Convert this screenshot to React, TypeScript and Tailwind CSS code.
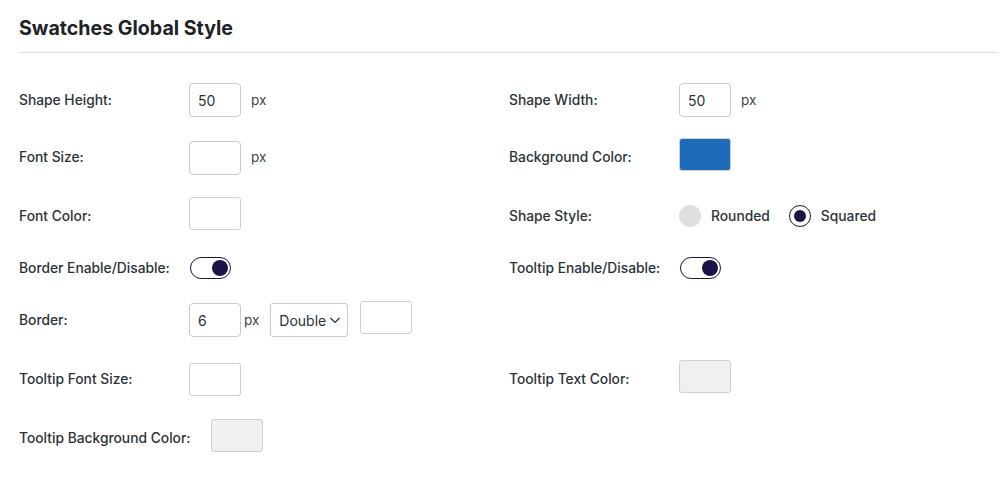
import React from "react";

const font = { fontFamily: "Inter, 'Noto Sans', sans-serif" };

function TextInput({ value }: { value?: string }) {
  return (
    <div className="w-[52px] h-[34px] border border-[#c9cacc] rounded-[4px] bg-white flex items-center pl-[8px] text-[14px] text-[#2c3338]">
      {value}
    </div>
  );
}

function ColorBox({ color = "#ffffff", up = true }: { color?: string; up?: boolean }) {
  return (
    <div
      className={`w-[52px] h-[33px] border border-[#cfd0d2] rounded-[3px] ${up ? "mb-[6px]" : ""}`}
      style={{ backgroundColor: color }}
    />
  );
}

function Px() {
  return <span className="text-[13.5px] text-[#3c434a] ml-[10px]">px</span>;
}

function Toggle() {
  return (
    <div className="w-[41px] h-[22px] rounded-full border-[1.5px] border-[#1b1547] flex items-center justify-end pr-[2px] bg-white">
      <div className="w-[16px] h-[16px] rounded-full bg-[#1b1547]" />
    </div>
  );
}

function Label({ children, w = "w-[170px]" }: { children: React.ReactNode; w?: string }) {
  return <div className={`${w} shrink-0 text-[13.8px] font-medium text-[#2c3338]`}>{children}</div>;
}

export default function App() {
  return (
    <div className="w-[1005px] h-[497px] bg-white" style={font}>
      <div className="pl-[19px] pt-[16px]">
        <h1 className="text-[19.6px] font-bold text-[#1d2327] leading-[24px]">Swatches Global Style</h1>
      </div>
      <div className="ml-[19px] mr-[7px] mt-[12px] h-px bg-[#dcdcde]" />
      <div className="pl-[19px] pt-[18px]">
        {/* Row 1 */}
        <div className="flex h-[58px] items-center">
          <div className="w-[490px] flex items-center">
            <Label>Shape Height:</Label>
            <TextInput value="50" />
            <Px />
          </div>
          <div className="flex items-center">
            <Label>Shape Width:</Label>
            <TextInput value="50" />
            <Px />
          </div>
        </div>
        {/* Row 2 */}
        <div className="flex h-[57px] items-center">
          <div className="w-[490px] flex items-center">
            <Label>Font Size:</Label>
            <TextInput />
            <Px />
          </div>
          <div className="flex items-center">
            <Label>Background Color:</Label>
            <ColorBox color="#1e6bb8" />
          </div>
        </div>
        {/* Row 3 */}
        <div className="flex h-[60px] items-center">
          <div className="w-[490px] flex items-center">
            <Label>Font Color:</Label>
            <ColorBox />
          </div>
          <div className="flex items-center">
            <Label>Shape Style:</Label>
            <div className="flex items-center">
              <div className="w-[22px] h-[22px] rounded-full bg-[#dfdfe0]" />
              <span className="ml-[10px] text-[13.8px] font-medium text-[#2c3338]">Rounded</span>
              <div className="ml-[19px] w-[22px] h-[22px] rounded-full border border-[#1b1547] flex items-center justify-center bg-white">
                <div className="w-[12px] h-[12px] rounded-full bg-[#1b1547]" />
              </div>
              <span className="ml-[10px] text-[13.8px] font-medium text-[#2c3338]">Squared</span>
            </div>
          </div>
        </div>
        {/* Row 4 */}
        <div className="flex h-[44px] items-center">
          <div className="w-[490px] flex items-center">
            <Label>Border Enable/Disable:</Label>
            <div className="ml-[1px]"><Toggle /></div>
          </div>
          <div className="flex items-center">
            <Label>Tooltip Enable/Disable:</Label>
            <div className="ml-[1px]"><Toggle /></div>
          </div>
        </div>
        {/* Row 5 */}
        <div className="flex h-[60px] items-center">
          <div className="w-[490px] flex items-center">
            <Label>Border:</Label>
            <TextInput value="6" />
            <span className="text-[13.5px] text-[#3c434a] ml-[3px]">px</span>
            <div className="ml-[11px] w-[78px] h-[34px] border border-[#c9cacc] rounded-[3px] flex items-center pl-[8px] text-[14px] text-[#2c3338]">
              Double
              <svg width="12" height="10" viewBox="0 0 12 10" className="ml-[3px] mt-[-1px]">
                <path d="M1.5 3 L6 7.5 L10.5 3" fill="none" stroke="#2c3338" strokeWidth="1.2" />
              </svg>
            </div>
            <div className="ml-[12px]"><ColorBox /></div>
          </div>
        </div>
        {/* Row 6 */}
        <div className="flex h-[58px] items-center">
          <div className="w-[490px] flex items-center">
            <Label>Tooltip Font Size:</Label>
            <ColorBox up={false} />
          </div>
          <div className="flex items-center">
            <Label>Tooltip Text Color:</Label>
            <ColorBox color="#f0f0f1" />
          </div>
        </div>
        {/* Row 7 */}
        <div className="flex h-[60px] items-center">
          <div className="flex items-center">
            <Label w="w-[192px]">Tooltip Background Color:</Label>
            <ColorBox color="#f0f0f1" />
          </div>
        </div>
      </div>
    </div>
  );
}
